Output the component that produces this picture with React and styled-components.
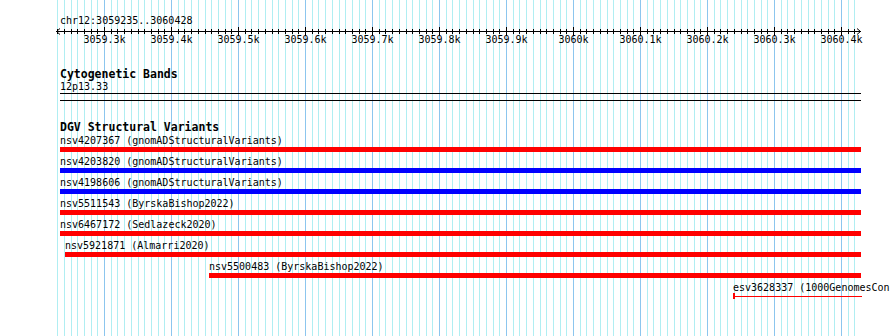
import styled, { createGlobalStyle } from "styled-components";

const GlobalStyle = createGlobalStyle`
  html, body {
    margin: 0;
    padding: 0;
    background: #fff;
  }
  body {
    font-family: "DejaVu Sans Mono", "Liberation Mono", monospace;
    font-size: 10px;
    color: #000;
  }
`;

// x of 3059300 on screen, and px per bp
const X0 = 104;
const BP0 = 3059300;
const PX_PER_BP = 0.67;
const toX = (bp) => X0 + (bp - BP0) * PX_PER_BP;

const gridLines = [];
for (let bp = 3059230; bp <= 3060420; bp += 10) {
  gridLines.push({ bp, x: toX(bp), major: bp % 100 === 0 });
}

const majorLabels = gridLines
  .filter((g) => g.major)
  .map((g) => ({
    x: g.x,
    text: `${(g.bp / 1000).toFixed(1).replace(/\.0$/, "")}k`,
  }));

const features = [
  { name: "nsv4207367", src: "gnomADStructuralVariants", color: "#ff0000", x: 60, end: 861 },
  { name: "nsv4203820", src: "gnomADStructuralVariants", color: "#0000ff", x: 60, end: 861 },
  { name: "nsv4198606", src: "gnomADStructuralVariants", color: "#0000ff", x: 60, end: 861 },
  { name: "nsv5511543", src: "ByrskaBishop2022", color: "#ff0000", x: 60, end: 861 },
  { name: "nsv6467172", src: "Sedlazeck2020", color: "#ff0000", x: 60, end: 861 },
  { name: "nsv5921871", src: "Almarri2020", color: "#ff0000", x: 65, end: 861 },
  { name: "nsv5500483", src: "ByrskaBishop2022", color: "#ff0000", x: 209, end: 861 },
  { name: "esv3628337", src: "1000GenomesConsortiumPhase3", color: "#ff0000", x: 733, end: 862, thin: true },
];

const Page = styled.div`
  position: relative;
  width: 890px;
  height: 336px;
  overflow: hidden;
  background: #fff;
`;

const GridLayer = styled.div`
  position: absolute;
  inset: 0;
  pointer-events: none;
`;

const GridLine = styled.div`
  position: absolute;
  top: 0;
  bottom: 0;
  width: 1px;
  background: ${(p) => (p.$major ? "#8cc6ee" : "#b0eef2")};
`;

const Content = styled.div`
  position: relative;
  padding-top: 15px;
`;

const Location = styled.div`
  padding-left: 60px;
  line-height: 11px;
  white-space: nowrap;
`;

const RulerSvg = styled.svg`
  display: block;
`;

const LabelRow = styled.div`
  position: relative;
  height: 11px;
  margin-top: -2px;
`;

const TickLabel = styled.span`
  position: absolute;
  top: 0;
  transform: translateX(-50%);
  line-height: 11px;
  white-space: nowrap;
`;

const Track = styled.section`
  margin-top: ${(p) => p.$gap}px;
`;

const TrackTitle = styled.div`
  padding-left: 60px;
  font-size: 11.5px;
  font-weight: bold;
  line-height: 13px;
  white-space: nowrap;
`;

const BandName = styled.div`
  padding-left: 60px;
  line-height: 11px;
`;

const Band = styled.div`
  margin: 1px 0 0 60px;
  width: 801px;
  height: 6px;
  border-top: 1px solid #000;
  border-bottom: 1px solid #000;
`;

const FeatureList = styled.div`
  margin-top: 1px;
`;

const Feature = styled.div`
  margin-left: ${(p) => p.$x}px;
  padding-bottom: 4px;
`;

const FeatureLabel = styled.div`
  line-height: 11px;
  white-space: nowrap;
`;

const Bar = styled.div`
  margin-top: 1px;
  width: ${(p) => p.$w}px;
  height: 5px;
  background: ${(p) => p.$color};
`;

const ThinBar = styled.div`
  position: relative;
  width: ${(p) => p.$w}px;
  height: 6px;
  border-left: 2px solid ${(p) => p.$color};
  box-sizing: border-box;

  &::after {
    content: "";
    position: absolute;
    left: 0;
    right: 0;
    top: 3px;
    height: 1px;
    background: ${(p) => p.$color};
  }
`;

function Ruler() {
  return (
    <RulerSvg width="890" height="10" shapeRendering="crispEdges">
      <line x1="56" y1="5.5" x2="861" y2="5.5" stroke="#000" />
      {gridLines.map((g) => (
        <line
          key={g.bp}
          x1={Math.round(g.x) + 0.5}
          x2={Math.round(g.x) + 0.5}
          y1={g.major ? 1 : 3}
          y2={g.major ? 10 : 8}
          stroke="#000"
        />
      ))}
      <polyline points="60,2.5 56.5,5.5 60,8.5" fill="none" stroke="#000" shapeRendering="auto" />
      <polyline points="857,2.5 860.5,5.5 857,8.5" fill="none" stroke="#000" shapeRendering="auto" />
    </RulerSvg>
  );
}

export default function App() {
  return (
    <Page>
      <GlobalStyle />
      <GridLayer>
        {gridLines.map((g) => (
          <GridLine key={g.bp} $major={g.major} style={{ left: Math.round(g.x) }} />
        ))}
      </GridLayer>
      <Content>
        <Location>chr12:3059235..3060428</Location>
        <Ruler />
        <LabelRow>
          {majorLabels.map((l) => (
            <TickLabel key={l.text} style={{ left: l.x + 0.5 }}>
              {l.text}
            </TickLabel>
          ))}
        </LabelRow>

        <Track $gap={23}>
          <TrackTitle>Cytogenetic Bands</TrackTitle>
          <BandName>12p13.33</BandName>
          <Band />
        </Track>

        <Track $gap={20}>
          <TrackTitle>DGV Structural Variants</TrackTitle>
          <FeatureList>
            {features.map((f) => (
              <Feature key={f.name} $x={f.x}>
                <FeatureLabel>
                  {f.name} ({f.src})
                </FeatureLabel>
                {f.thin ? (
                  <ThinBar $w={f.end - f.x} $color={f.color} />
                ) : (
                  <Bar $w={f.end - f.x} $color={f.color} />
                )}
              </Feature>
            ))}
          </FeatureList>
        </Track>
      </Content>
    </Page>
  );
}
